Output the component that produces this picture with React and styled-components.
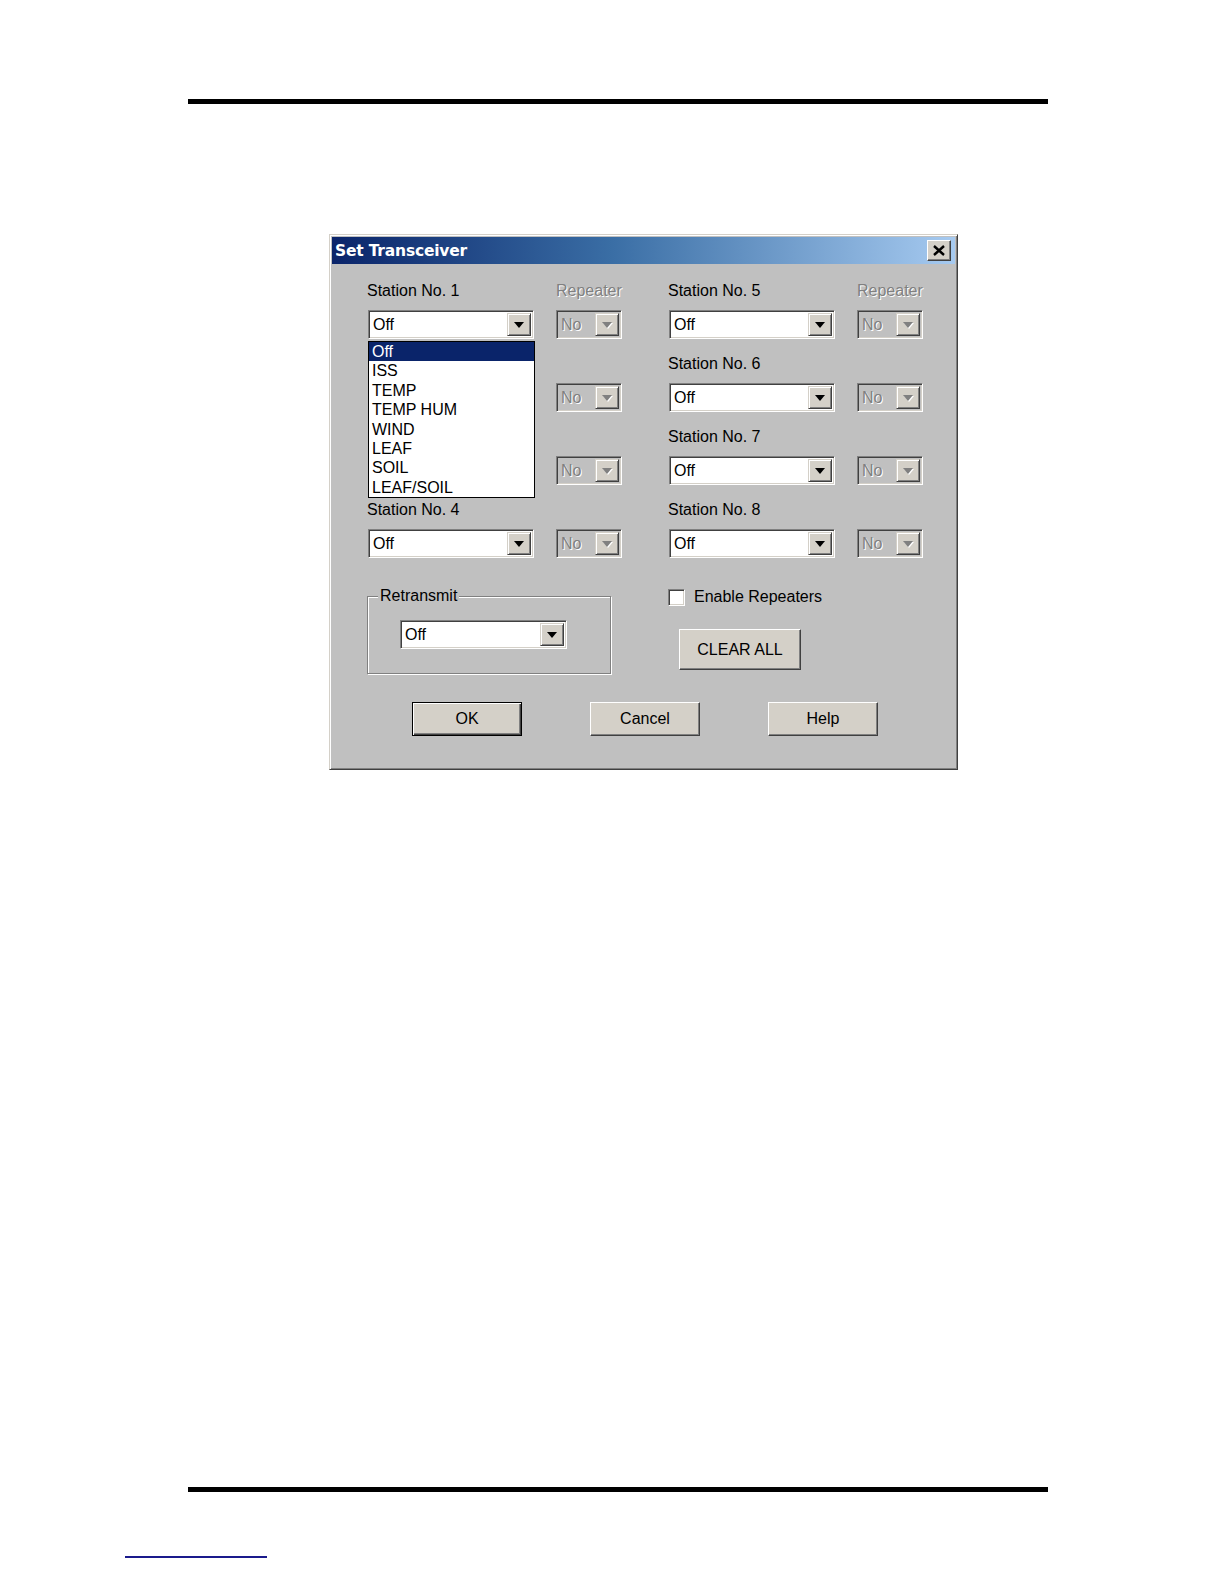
import React from "react";
import styled, { createGlobalStyle } from "styled-components";

const Global = createGlobalStyle`
  html, body { margin: 0; padding: 0; background: #ffffff; }
  body { font-family: "Liberation Sans", Arial, sans-serif; }
  * { box-sizing: border-box; }
`;

const Page = styled.div`
  width: 1224px;
  height: 1584px;
  padding-top: 99px;
  position: relative;
  overflow: hidden;
`;

const Rule = styled.div`
  margin-left: 188px;
  width: 860px;
  height: 5px;
  background: #000;
  margin-top: ${(p) => p.$top || 0}px;
`;

const LinkLine = styled.div`
  margin-left: 125px;
  margin-top: ${(p) => p.$top}px;
  width: 142px;
  height: 2px;
  background: #1a1a8c;
`;

const Dialog = styled.div`
  margin-top: 130px;
  margin-left: 329px;
  width: 629px;
  background: #c0c0c0;
  border: 1px solid;
  border-color: #d4d0c8 #404040 #404040 #d4d0c8;
  padding: 2px;
  box-shadow: inset 1px 1px #ffffff, inset -1px -1px #808080;
`;

const TitleBar = styled.div`
  height: 27px;
  display: flex;
  align-items: center;
  justify-content: space-between;
  padding: 0 4px 0 3px;
  background: linear-gradient(to right, #0a246a 0%, #3a6ea5 45%, #a6caf0 100%);
`;

const TitleText = styled.span`
  color: #ffffff;
  font-family: "DejaVu Sans", Verdana, sans-serif;
  font-weight: bold;
  font-size: 15.5px;
  letter-spacing: -0.2px;
`;

const CloseButton = styled.div`
  width: 24px;
  height: 21px;
  background: #d4d0c8;
  border: 1px solid;
  border-color: #ffffff #404040 #404040 #ffffff;
  box-shadow: inset -1px -1px #808080;
  display: flex;
  align-items: center;
  justify-content: center;
`;

const Body = styled.div`
  padding: 17px 0 31px 35px;
  font-size: 16px;
  color: #000;
`;

const StationGrid = styled.div`
  display: grid;
  grid-template-columns: 255px 255px;
  column-gap: 46px;
`;

const Column = styled.div`
  display: flex;
  flex-direction: column;
`;

const Station = styled.div`
  position: relative;
  margin-bottom: ${(p) => (p.$last ? 0 : 15)}px;
`;

const StationHead = styled.div`
  display: grid;
  grid-template-columns: 189px 66px;
  height: 20px;
  line-height: 20px;
  margin-bottom: 9px;
`;

const Label = styled.span`
  white-space: nowrap;
  color: ${(p) => (p.$disabled ? "#808080" : "#000")};
  text-shadow: ${(p) => (p.$disabled ? "1px 1px 0 #ffffff" : "none")};
  visibility: ${(p) => (p.$hidden ? "hidden" : "visible")};
`;

const ComboRow = styled.div`
  display: flex;
  gap: 22px;
  padding-left: 1px;
`;

const ComboBox = styled.div`
  width: ${(p) => p.$width}px;
  height: 29px;
  border: 1px solid;
  border-color: #808080 #ffffff #ffffff #808080;
  box-shadow: inset 1px 1px #404040, inset -1px -1px #d4d0c8;
  padding: 2px;
  background: ${(p) => (p.$disabled ? "#c0c0c0" : "#ffffff")};
  display: flex;
  align-items: stretch;
`;

const ComboText = styled.span`
  flex: 1;
  padding-left: 2px;
  line-height: 23px;
  font-size: 16px;
  color: ${(p) => (p.$disabled ? "#808080" : "#000")};
  text-shadow: ${(p) => (p.$disabled ? "1px 1px 0 #ffffff" : "none")};
`;

const ArrowButton = styled.div`
  width: 24px;
  background: #d4d0c8;
  border: 1px solid;
  border-color: #d4d0c8 #404040 #404040 #d4d0c8;
  box-shadow: inset 1px 1px #ffffff, inset -1px -1px #808080;
  display: flex;
  align-items: center;
  justify-content: center;
`;

const Arrow = styled.div`
  width: 0;
  height: 0;
  border-left: 5px solid transparent;
  border-right: 5px solid transparent;
  border-top: 6px solid ${(p) => (p.$disabled ? "#808080" : "#000")};
  filter: ${(p) => (p.$disabled ? "drop-shadow(1px 1px 0 #ffffff)" : "none")};
`;

const DropList = styled.div`
  position: absolute;
  top: 60px;
  left: 1px;
  width: 167px;
  height: 157px;
  background: #ffffff;
  border: 1px solid #000;
  z-index: 5;
`;

const DropItem = styled.div`
  height: 19.4px;
  line-height: 19.4px;
  padding-left: 3px;
  font-size: 16px;
  background: ${(p) => (p.$selected ? "#0a246a" : "transparent")};
  color: ${(p) => (p.$selected ? "#ffffff" : "#000")};
`;

const Lower = styled.div`
  display: grid;
  grid-template-columns: 255px 255px;
  column-gap: 46px;
  margin-top: 30px;
`;

const GroupBox = styled.div`
  position: relative;
  margin-top: 8px;
  width: 244px;
  height: 78px;
  border: 1px solid #808080;
  box-shadow: inset 1px 1px #ffffff, 1px 1px 0 #ffffff;
  padding: 23px 0 0 32px;
`;

const Legend = styled.span`
  position: absolute;
  top: -11px;
  left: 10px;
  padding: 0 2px;
  background: #c0c0c0;
  line-height: 20px;
`;

const RightLower = styled.div`
  display: flex;
  flex-direction: column;
  align-items: flex-start;
`;

const CheckRow = styled.div`
  display: flex;
  align-items: center;
  gap: 9px;
  height: 18px;
`;

const CheckBox = styled.div`
  width: 17px;
  height: 17px;
  background: #ffffff;
  border: 1px solid;
  border-color: #808080 #ffffff #ffffff #808080;
  box-shadow: inset 1px 1px #404040, inset -1px -1px #d4d0c8;
`;

const Button = styled.div`
  width: ${(p) => p.$w}px;
  height: ${(p) => p.$h}px;
  margin-top: ${(p) => p.$mt || 0}px;
  margin-left: ${(p) => p.$ml || 0}px;
  background: #d4d0c8;
  border: 1px solid;
  border-color: ${(p) => (p.$default ? "#000" : "#ffffff #404040 #404040 #ffffff")};
  box-shadow: ${(p) =>
    p.$default
      ? "inset 1px 1px #ffffff, inset -1px -1px #404040, inset -2px -2px #808080"
      : "inset -1px -1px #808080"};
  display: flex;
  align-items: center;
  justify-content: center;
  font-size: 16px;
  color: #000;
`;

const ButtonRow = styled.div`
  display: flex;
  gap: 68px;
  padding-left: 45px;
  margin-top: 28px;
`;

const XIcon = () => (
  <svg width="12" height="11" viewBox="0 0 12 11">
    <path d="M1 1 L11 10 M11 1 L1 10" stroke="#000" strokeWidth="2.4" />
  </svg>
);

const Combo = ({ width, value, disabled }) => (
  <ComboBox $width={width} $disabled={disabled}>
    <ComboText $disabled={disabled}>{value}</ComboText>
    <ArrowButton>
      <Arrow $disabled={disabled} />
    </ArrowButton>
  </ComboBox>
);

const items = ["Off", "ISS", "TEMP", "TEMP HUM", "WIND", "LEAF", "SOIL", "LEAF/SOIL"];

const StationBlock = ({ n, showRepeater, open, last, covered }) => (
  <Station $last={last}>
    <StationHead>
      <Label $hidden={covered}>Station No. {n}</Label>
      {showRepeater && <Label $disabled>Repeater</Label>}
    </StationHead>
    <ComboRow>
      {covered ? <ComboBox $width={166} /> : <Combo width={166} value="Off" />}
      <Combo width={66} value="No" disabled />
    </ComboRow>
    {open && (
      <DropList>
        {items.map((it, i) => (
          <DropItem key={it} $selected={i === 0}>
            {it}
          </DropItem>
        ))}
      </DropList>
    )}
  </Station>
);

export default function App() {
  return (
    <Page>
      <Global />
      <Rule />
      <Dialog>
        <TitleBar>
          <TitleText>Set Transceiver</TitleText>
          <CloseButton>
            <XIcon />
          </CloseButton>
        </TitleBar>
        <Body>
          <StationGrid>
            <Column>
              <StationBlock n={1} showRepeater open />
              <StationBlock n={2} covered />
              <StationBlock n={3} covered />
              <StationBlock n={4} last />
            </Column>
            <Column>
              <StationBlock n={5} showRepeater />
              <StationBlock n={6} />
              <StationBlock n={7} />
              <StationBlock n={8} last />
            </Column>
          </StationGrid>
          <Lower>
            <GroupBox>
              <Legend>Retransmit</Legend>
              <Combo width={167} value="Off" />
            </GroupBox>
            <RightLower>
              <CheckRow>
                <CheckBox />
                <Label>Enable Repeaters</Label>
              </CheckRow>
              <Button $w={122} $h={41} $mt={23} $ml={11}>
                CLEAR ALL
              </Button>
            </RightLower>
          </Lower>
          <ButtonRow>
            <Button $w={110} $h={34} $default>
              OK
            </Button>
            <Button $w={110} $h={34}>
              Cancel
            </Button>
            <Button $w={110} $h={34}>
              Help
            </Button>
          </ButtonRow>
        </Body>
      </Dialog>
      <Rule $top={717} />
      <LinkLine $top={64} />
    </Page>
  );
}
